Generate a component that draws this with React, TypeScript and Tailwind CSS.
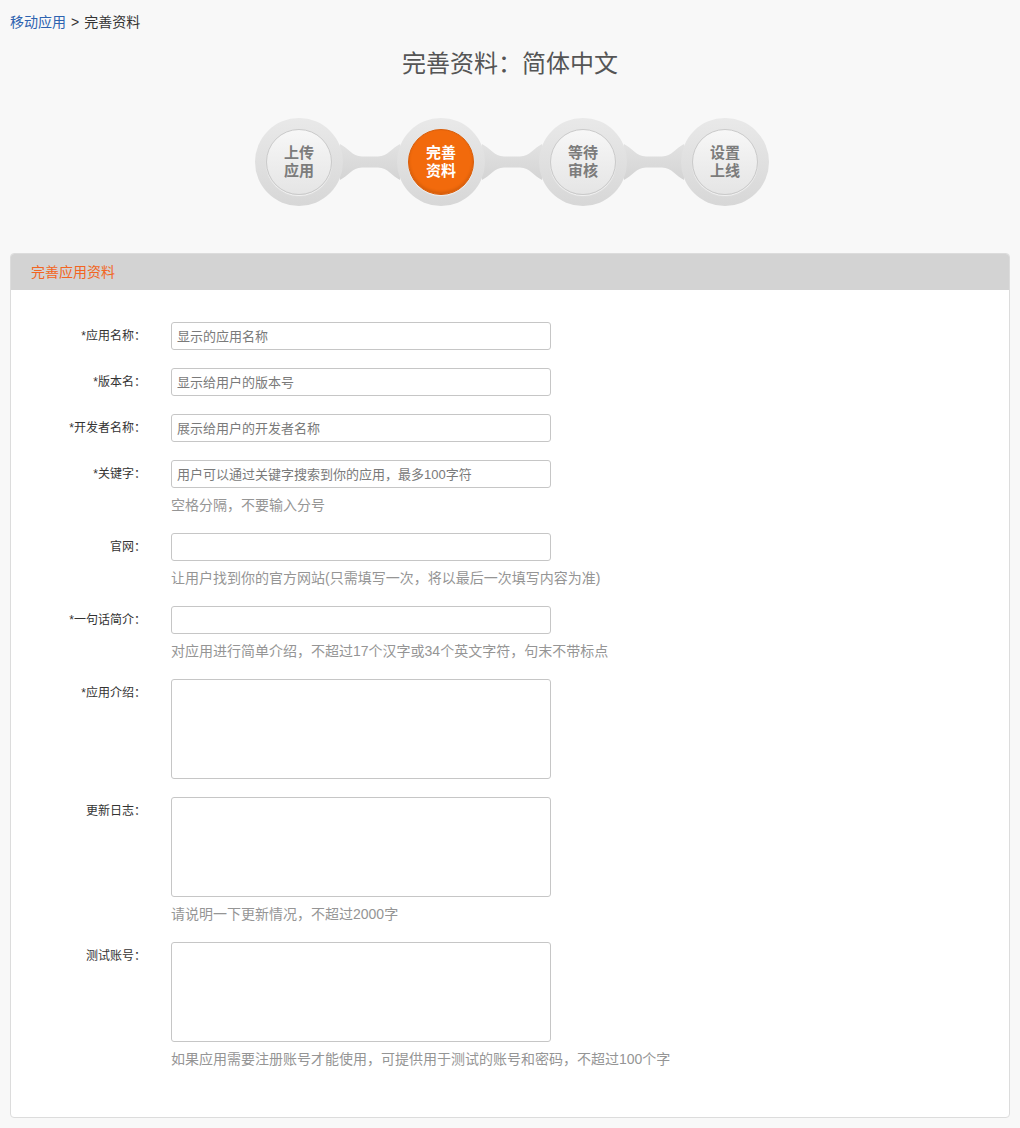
import React from "react";

const FONT = '"Liberation Sans", "Noto Sans CJK SC", sans-serif';

function Connector() {
  return (
    <svg width="60" height="40" viewBox="0 0 60 40" className="-mx-[3px] shrink-0 relative z-0">
      <defs>
        <linearGradient id="cg" x1="0" y1="0" x2="0" y2="1">
          <stop offset="0" stopColor="#e2e2e2" />
          <stop offset="1" stopColor="#d4d4d4" />
        </linearGradient>
      </defs>
      <path
        d="M0,2 C8,6 12,14 22,14.5 L38,14.5 C48,14 52,6 60,2 L60,38 C52,34 48,26 38,25.5 L22,25.5 C12,26 8,34 0,38 Z"
        fill="url(#cg)"
      />
    </svg>
  );
}

function Step({ a, b, active }: { a: string; b: string; active?: boolean }) {
  return (
    <div className="relative z-10 w-[88px] h-[88px] shrink-0 rounded-full bg-gradient-to-b from-[#e9e9e9] to-[#d7d7d7] flex items-center justify-center">
      {active ? (
        <div className="w-[66px] h-[66px] rounded-full bg-[#f26a0c] border border-[#d85e0c] shadow-[inset_0_-2px_3px_rgba(0,0,0,0.12),0_1px_1px_rgba(255,255,255,0.6)] flex flex-col items-center justify-center text-white text-[15px] leading-[18px] font-bold">
          <span>{a}</span>
          <span>{b}</span>
        </div>
      ) : (
        <div className="w-[66px] h-[66px] rounded-full bg-gradient-to-b from-[#f7f7f7] to-[#e5e5e5] border border-[#cacaca] shadow-[0_1px_1px_rgba(255,255,255,0.7)] flex flex-col items-center justify-center text-[#7c7c7c] text-[15px] leading-[18px] font-bold">
          <span>{a}</span>
          <span>{b}</span>
        </div>
      )}
    </div>
  );
}

function Row({
  label,
  req,
  placeholder,
  hint,
  area,
}: {
  label: string;
  req?: boolean;
  placeholder?: string;
  hint?: string;
  area?: boolean;
}) {
  return (
    <div className="flex mb-[18px]">
      <div className="w-[135px] text-right text-[12px] leading-[28px] text-[#333] shrink-0">
        {req ? "*" : ""}
        {label}：
      </div>
      <div className="ml-[25px] flex flex-col">
        {area ? (
          <textarea
            className="w-[380px] h-[100px] border border-[#c6c6c6] rounded-[3px] bg-white resize-none outline-none px-[5px] py-[4px] text-[13px]"
            style={{ fontFamily: FONT }}
          />
        ) : (
          <input
            className="w-[380px] h-[28px] border border-[#c6c6c6] rounded-[3px] bg-white outline-none px-[5px] text-[13px] text-[#333] placeholder:text-[#7a7a7a]"
            placeholder={placeholder}
            style={{ fontFamily: FONT }}
          />
        )}
        {hint && <div className="mt-[7px] text-[14px] leading-[20px] text-[#959595]">{hint}</div>}
      </div>
    </div>
  );
}

export default function App() {
  return (
    <div className="min-h-[1128px] bg-[#f8f8f8] px-[10px] pt-[14px]" style={{ fontFamily: FONT }}>
      <div className="text-[14px] leading-[16px] text-[#333]">
        <span className="text-[#2d63b0]">移动应用</span>
        <span className="ml-[5px] mr-[5px]">&gt;</span>
        <span>完善资料</span>
      </div>
      <h1 className="mt-[18px] text-center text-[24px] leading-[32px] text-[#555]">完善资料：简体中文</h1>
      <div className="mt-[38px] flex items-center justify-center pl-[4px]">
        <Step a="上传" b="应用" />
        <Connector />
        <Step a="完善" b="资料" active />
        <Connector />
        <Step a="等待" b="审核" />
        <Connector />
        <Step a="设置" b="上线" />
      </div>
      <div className="mt-[47px] border border-[#dcdcdc] rounded-[4px] bg-white overflow-hidden">
        <div className="h-[36px] bg-[#d3d3d3] flex items-center pl-[20px] text-[14px] text-[#f26522]">完善应用资料</div>
        <div className="pt-[32px] pb-[30px]">
          <Row label="应用名称" req placeholder="显示的应用名称" />
          <Row label="版本名" req placeholder="显示给用户的版本号" />
          <Row label="开发者名称" req placeholder="展示给用户的开发者名称" />
          <Row
            label="关键字"
            req
            placeholder="用户可以通过关键字搜索到你的应用，最多100字符"
            hint="空格分隔，不要输入分号"
          />
          <Row label="官网" hint="让用户找到你的官方网站(只需填写一次，将以最后一次填写内容为准)" />
          <Row label="一句话简介" req hint="对应用进行简单介绍，不超过17个汉字或34个英文字符，句末不带标点" />
          <Row label="应用介绍" req area />
          <Row label="更新日志" area hint="请说明一下更新情况，不超过2000字" />
          <Row label="测试账号" area hint="如果应用需要注册账号才能使用，可提供用于测试的账号和密码，不超过100个字" />
        </div>
      </div>
    </div>
  );
}
